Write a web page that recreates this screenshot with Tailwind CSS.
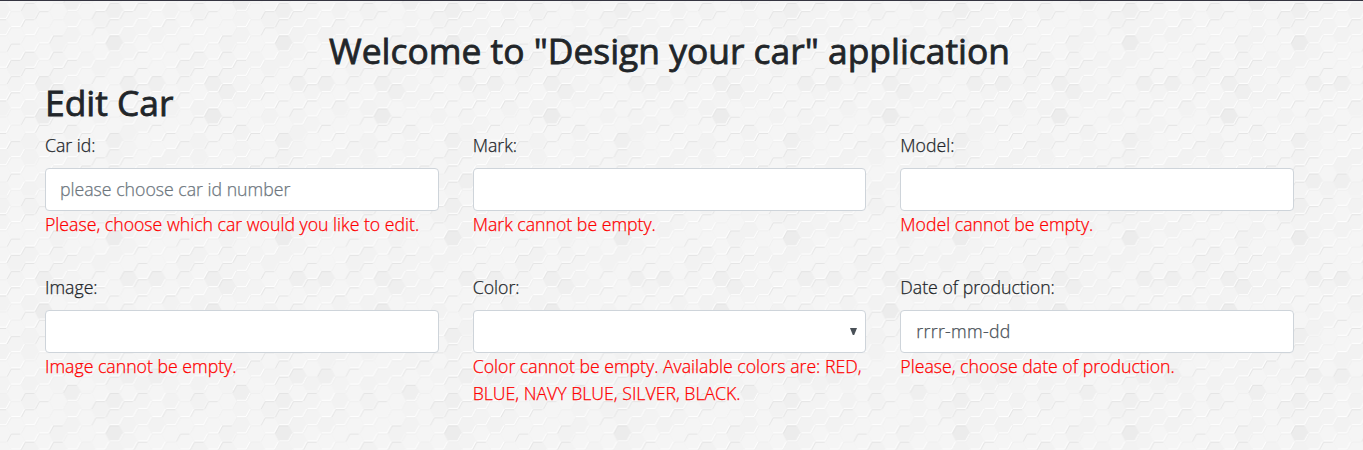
<!DOCTYPE html>
<html lang="en">
<head>
<meta charset="utf-8">
<title>Design your car</title>
<script src="https://cdn.jsdelivr.net/npm/@tailwindcss/browser@4"></script>
</head>
<body class="relative isolate h-[450px] overflow-hidden border-t border-[#343440] bg-[#f4f4f4] font-['Open_Sans','Noto_Sans',sans-serif] text-[17.7px] leading-[27px] font-light text-[#212529] [-webkit-text-stroke:0.25px_currentColor]">
<svg class="absolute inset-x-0 -top-px -z-10 h-[450px] w-full" aria-hidden="true">
  <defs><pattern id="honeycomb" width="169.33" height="195" patternUnits="userSpaceOnUse"></pattern></defs>
  <rect width="100%" height="100%" fill="url(#honeycomb)"/>
</svg>
<main class="mr-[69px] ml-[45px] pt-[28px]">
  <h1 class="mb-[9px] text-center text-[35.4px] leading-[43px] font-normal [-webkit-text-stroke:0.8px_currentColor]">Welcome to "Design your car" application</h1>
  <h2 class="mb-2 text-[35.4px] leading-[43px] font-normal [-webkit-text-stroke:0.8px_currentColor]">Edit Car</h2>
  <form class="grid grid-cols-3 gap-x-[34px]">
    <div class="h-[142px]">
      <label class="mb-[9px] block">Car id:</label>
      <div class="flex h-[43px] items-center rounded border border-[#ced4da] bg-white px-[14px] text-[#6c757d]">please choose car id number</div>
      <p class="text-[#ff0000]">Please, choose which car would you like to edit.</p>
    </div>
    <div class="h-[142px]">
      <label class="mb-[9px] block">Mark:</label>
      <div class="h-[43px] rounded border border-[#ced4da] bg-white"></div>
      <p class="text-[#ff0000]">Mark cannot be empty.</p>
    </div>
    <div class="h-[142px]">
      <label class="mb-[9px] block">Model:</label>
      <div class="h-[43px] rounded border border-[#ced4da] bg-white"></div>
      <p class="text-[#ff0000]">Model cannot be empty.</p>
    </div>
    <div class="h-[142px]">
      <label class="mb-[9px] block">Image:</label>
      <div class="h-[43px] rounded border border-[#ced4da] bg-white"></div>
      <p class="text-[#ff0000]">Image cannot be empty.</p>
    </div>
    <div class="h-[142px]">
      <label class="mb-[9px] block">Color:</label>
      <div class="flex h-[43px] items-center justify-end rounded border border-[#ced4da] bg-white pr-2">
        <svg class="h-[7px] w-[7px] fill-[#495057]" viewBox="0 0 7 7"><path d="M0 0h7L4.2 7H2.8z"/></svg>
      </div>
      <p class="text-[#ff0000]">Color cannot be empty. Available colors are: RED,<br>BLUE, NAVY BLUE, SILVER, BLACK.</p>
    </div>
    <div class="h-[142px]">
      <label class="mb-[9px] block">Date of production:</label>
      <div class="flex h-[43px] items-center rounded border border-[#ced4da] bg-white px-[15px] text-[#495057]"><span class="tracking-[0.3px]">rrrr-mm-dd</span></div>
      <p class="text-[#ff0000]">Please, choose date of production.</p>
    </div>
  </form>
</main>
<script>
// Flat-topped honeycomb on a 12 x 12 cell repeating tile.
const CW = 169.33 / 12, RH = 195 / 12;
const dark = new Map();
const mark = (x, y, v) => {
  const c = Math.round((x - 1.7) / CW), off = c % 2 ? 2.9 : 11;
  const r = Math.round((y - off) / RH);
  dark.set(((c % 12) + 12) % 12 + ',' + ((r % 12) + 12) % 12, v);
};
[[1187,11,1],[1215,9,1],[1215,60,1],[1243,43,1],[1257,35,1],[1285,19,1],[1299,11,2],[1299,43,3],[1313,35,1],[1341,35,1],[1355,12,1],
[1201,68,1],[1285,67,1],[1299,60,1],[1313,83,2],[1341,83,2],[1229,84,2],[1243,92,2],[1230,117,3],[1215,108,1],[1187,108,1],[1285,117,1],[1313,130,1],
[1047,140,1],[1047,157,1],[1131,138,2],[1131,157,1],[1089,132,1],[1187,157,1],[1313,180,2],[1327,188,2],[1341,180,2],[1341,163,1],[1300,205,1],
[146,383,1],[78,392,2],[34,383,1],[175,399,1],[118,399,2],[105,407,1]].forEach(a => mark(...a));
const fills = ['#f5f5f5', '#f2f2f2', '#efefef', '#ececec'];
let seed = 7, out = '<rect width="170" height="195" fill="#f4f4f4"/>', lines = '';
const rnd = () => (seed = (seed * 16807) % 2147483647) / 2147483647;
for (let c = 0; c < 12; c++) for (let r = 0; r < 12; r++) {
  const level = dark.get(c + ',' + r) || 0, a = rnd(), b = rnd();
  const fill = level ? fills[level] : a < .3 ? '#f3f3f3' : fills[0];
  for (const dx of [0, 169.33]) for (const dy of [0, 195]) {
    const x = 1.7 + c * CW + dx, y = (c % 2 ? 2.9 : 11) + r * RH + dy;
    if (x > 181 || y > 205) continue;
    out += `<path d="M${x-9.2} ${y}l4.4-8.1h9.6l4.4 8.1-4.4 8.1h-9.6z" fill="${fill}"/>`;
    lines += `<path d="M${x-8.6} ${y}l4-7.5h9" stroke="${b < .35 || level > 1 ? '#e3e3e3' : '#efefef'}"/>`;
    lines += `<path d="M${x-4.6} ${y+7.4}h9l4-7.4" stroke="${a < .7 || level > 1 ? '#ffffff' : '#f6f6f6'}"/>`;
  }
}
document.getElementById('honeycomb').innerHTML = out + '<g fill="none" stroke-width=".9">' + lines + '</g>';
</script>
</body>
</html>
